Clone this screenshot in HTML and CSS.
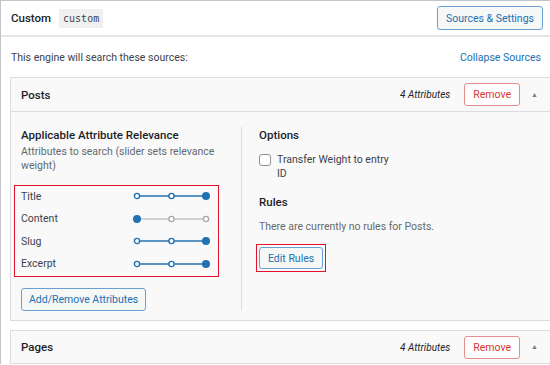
FILE: index.html
```html
<!DOCTYPE html>
<html lang="en">
<head>
  <meta charset="UTF-8" />
  <meta name="viewport" content="width=device-width, initial-scale=1" />
  <title>Engine Sources</title>
  <link rel="stylesheet" href="styles.css">
</head>
<body>
  <div class="engine">
    <div class="engine-header">
      <div class="engine-name">
        <strong>Custom</strong>
        <code>custom</code>
      </div>
      <button class="button">Sources &amp; Settings</button>
    </div>

    <div class="engine-intro">
      <p>This engine will search these sources:</p>
      <a href="#" class="link">Collapse Sources</a>
    </div>

    <div class="source">
      <div class="source-header">
        <h3>Posts</h3>
        <div class="source-actions">
          <em>4 Attributes</em>
          <button class="button button-remove">Remove</button>
          <span class="toggle">&#9650;</span>
        </div>
      </div>

      <div class="source-body">
        <div class="col col-attributes">
          <h4>Applicable Attribute Relevance</h4>
          <p class="description">Attributes to search (slider sets relevance weight)</p>

          <div class="attributes highlight">
            <div class="attribute">
              <span>Title</span>
              <svg class="weight" width="80" height="10" viewBox="0 0 80 10">
                <line x1="4" y1="5" x2="73" y2="5" stroke="#2271b1" stroke-width="1.5"/>
                <circle cx="4" cy="5" r="2.6" fill="#fff" stroke="#2271b1" stroke-width="1.4"/>
                <circle cx="38.5" cy="5" r="2.6" fill="#fff" stroke="#2271b1" stroke-width="1.4"/>
                <circle cx="73" cy="5" r="4" fill="#2271b1"/>
              </svg>
            </div>
            <div class="attribute">
              <span>Content</span>
              <svg class="weight" width="80" height="10" viewBox="0 0 80 10">
                <line x1="4" y1="5" x2="73" y2="5" stroke="#c3c4c7" stroke-width="1.5"/>
                <circle cx="4" cy="5" r="4" fill="#2271b1"/>
                <circle cx="38.5" cy="5" r="2.6" fill="#fff" stroke="#a7aaad" stroke-width="1.4"/>
                <circle cx="73" cy="5" r="2.6" fill="#fff" stroke="#a7aaad" stroke-width="1.4"/>
              </svg>
            </div>
            <div class="attribute">
              <span>Slug</span>
              <svg class="weight" width="80" height="10" viewBox="0 0 80 10">
                <line x1="4" y1="5" x2="73" y2="5" stroke="#2271b1" stroke-width="1.5"/>
                <circle cx="4" cy="5" r="2.6" fill="#fff" stroke="#2271b1" stroke-width="1.4"/>
                <circle cx="38.5" cy="5" r="2.6" fill="#fff" stroke="#2271b1" stroke-width="1.4"/>
                <circle cx="73" cy="5" r="4" fill="#2271b1"/>
              </svg>
            </div>
            <div class="attribute">
              <span>Excerpt</span>
              <svg class="weight" width="80" height="10" viewBox="0 0 80 10">
                <line x1="4" y1="5" x2="73" y2="5" stroke="#2271b1" stroke-width="1.5"/>
                <circle cx="4" cy="5" r="2.6" fill="#fff" stroke="#2271b1" stroke-width="1.4"/>
                <circle cx="38.5" cy="5" r="2.6" fill="#fff" stroke="#2271b1" stroke-width="1.4"/>
                <circle cx="73" cy="5" r="4" fill="#2271b1"/>
              </svg>
            </div>
          </div>

          <button class="button button-add">Add/Remove Attributes</button>
        </div>

        <div class="col col-options">
          <h4>Options</h4>
          <label class="option">
            <input type="checkbox" />
            <span>Transfer Weight to entry ID</span>
          </label>

          <h4 class="rules-title">Rules</h4>
          <p class="description">There are currently no rules for Posts.</p>
          <span class="highlight rules-highlight">
            <button class="button button-rules">Edit Rules</button>
          </span>
        </div>
      </div>
    </div>

    <div class="source">
      <div class="source-header">
        <h3>Pages</h3>
        <div class="source-actions">
          <em>4 Attributes</em>
          <button class="button button-remove">Remove</button>
          <span class="toggle">&#9650;</span>
        </div>
      </div>
    </div>
  </div>
</body>
</html>
```

FILE: styles.css
```css
* {
  margin: 0;
  padding: 0;
  box-sizing: border-box;
}

body {
  font-family: Roboto, "Noto Sans", sans-serif;
  font-size: 10.5px;
  color: #3c434a;
  background: #fff;
  overflow: hidden;
  height: 365px;
}

.engine {
  width: 562px;
  border-top: 1px solid #c3c4c7;
  border-left: 1px solid #c3c4c7;
  background: #fff;
}

.engine-header {
  height: 36px;
  display: flex;
  align-items: center;
  justify-content: space-between;
  padding: 0 19px 0 10px;
  border-bottom: 2px solid #e4e5e7;
}

.engine-name {
  display: flex;
  align-items: center;
  gap: 8px;
}

.engine-name strong {
  font-weight: 500;
  font-size: 11.5px;
  color: #1d2327;
}

.engine-name code {
  font-family: "DejaVu Sans Mono", monospace;
  font-size: 10px;
  background: #f0f0f1;
  padding: 4px 4px;
  color: #3c434a;
}

.button {
  font-family: inherit;
  font-size: 10.5px;
  background: #f6f7f7;
  color: #2271b1;
  border: 1px solid #6a9fd2;
  border-radius: 3px;
  height: 24px;
  padding: 0 8px;
  cursor: pointer;
}

.engine-intro {
  height: 40px;
  display: flex;
  align-items: center;
  justify-content: space-between;
  padding: 0 21px 0 10px;
}

.link {
  color: #2271b1;
  text-decoration: none;
}

.source {
  margin: 0 9px 9px 9px;
  border: 1px solid #dcdcde;
  background: #f9f9f9;
}

.source-header {
  height: 33px;
  display: flex;
  align-items: center;
  justify-content: space-between;
  padding: 0 14px 0 10px;
}

.source + .source .source-header {
  height: 32px;
}

.source-header h3 {
  font-size: 11.5px;
  font-weight: 500;
  color: #1d2327;
}

.source-actions {
  display: flex;
  align-items: center;
}

.source-actions em {
  font-size: 10px;
  color: #1d2327;
  margin-right: 14px;
}

.button-remove {
  color: #d63638;
  background: #fff;
  border-color: #e58c8d;
  height: 23px;
  padding: 0 8px;
}

.toggle {
  font-size: 7px;
  color: #787c82;
  margin-left: 11px;
}

.source-body {
  display: flex;
  border-top: 1px solid #dcdcde;
  padding: 15px 0 9px 10px;
}

.col-attributes {
  width: 221px;
  border-right: 1px solid #dcdcde;
}

.col-options {
  padding-left: 17px;
}

h4 {
  font-size: 11.5px;
  font-weight: 500;
  color: #1d2327;
  line-height: 16px;
}

.description {
  color: #646970;
  line-height: 14px;
  margin-top: 2px;
  max-width: 210px;
}

.attributes {
  margin: 12px 22px 0 -7px;
  padding: 0 5px 0 6px;
}

.highlight {
  border: 1px solid #e0112b;
}

.attribute {
  height: 22.5px;
  display: flex;
  align-items: center;
  justify-content: space-between;
  padding-bottom: 2px;
}

.weight {
  display: block;
}

.button-add {
  margin-top: 11px;
  height: 23px;
  padding: 0 7px;
}

.option {
  display: flex;
  align-items: flex-start;
  gap: 6px;
  margin-top: 10px;
  line-height: 14px;
  max-width: 135px;
}

.option input {
  appearance: none;
  width: 12px;
  height: 12px;
  margin-top: 1px;
  border: 1px solid #8c8f94;
  border-radius: 3px;
  background: #fff;
  flex-shrink: 0;
}

.rules-title {
  margin-top: 13px;
}

.col-options .description {
  margin-top: 10px;
}

.rules-highlight {
  display: inline-block;
  margin: 10px 0 0 -3px;
  padding: 2px;
}

.button-rules {
  display: block;
  height: 22px;
  padding: 0 8px;
}
```
